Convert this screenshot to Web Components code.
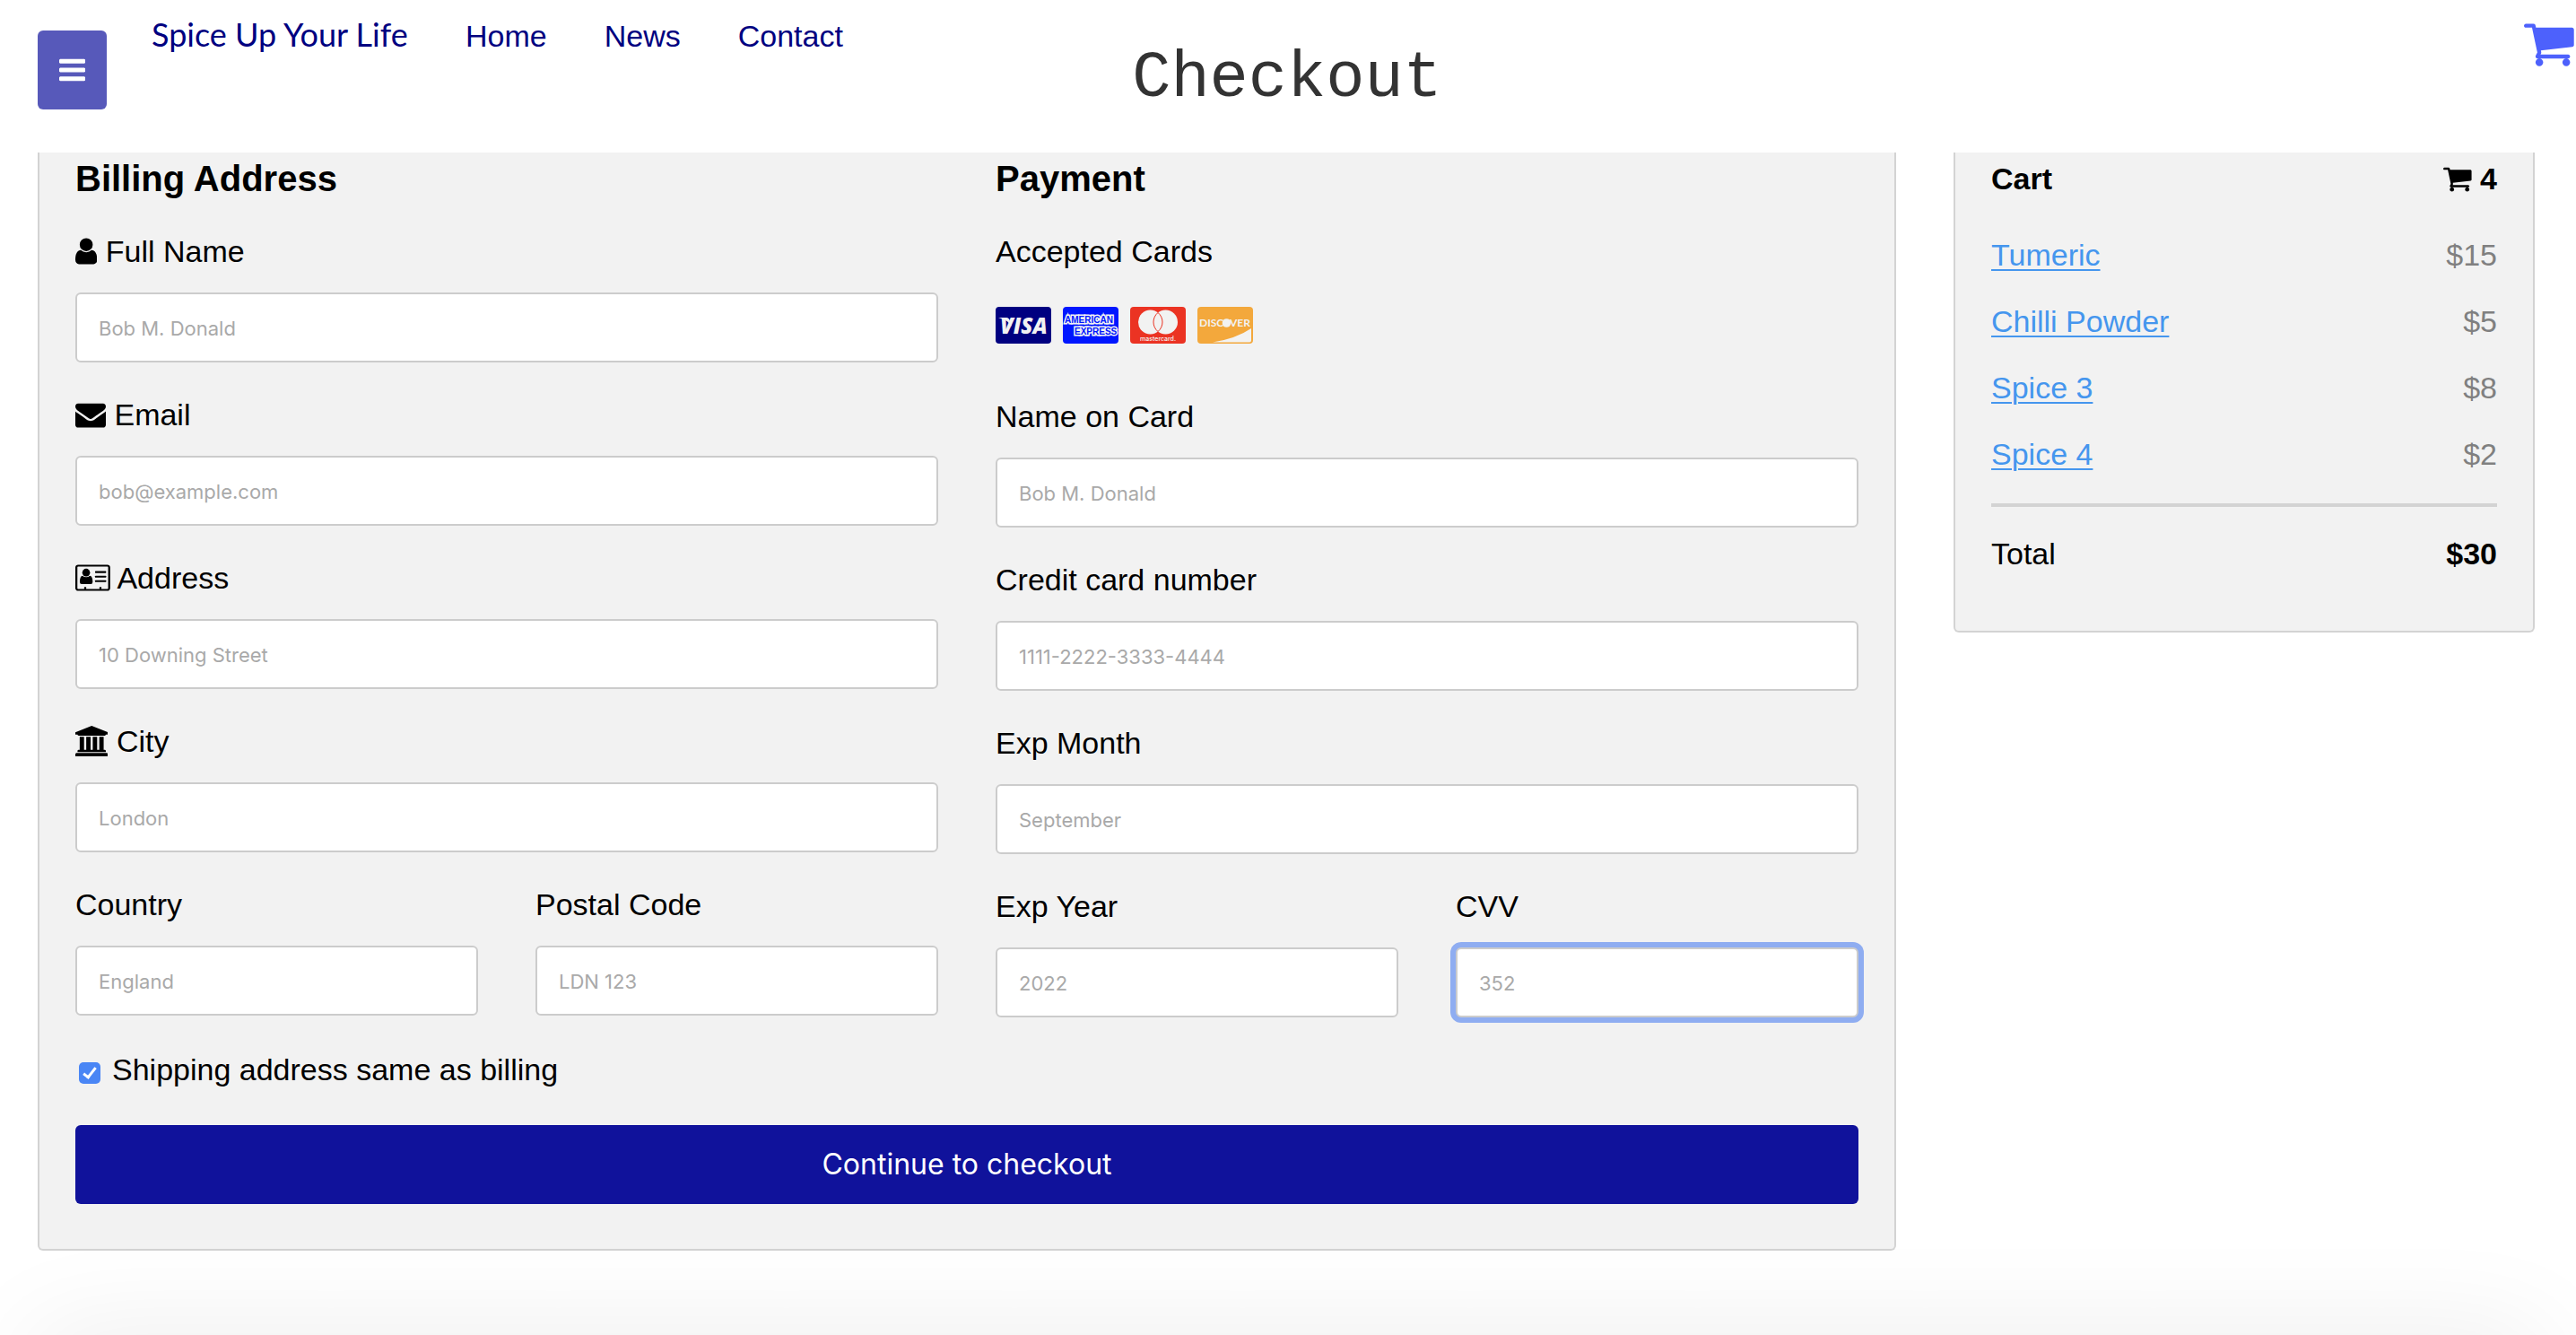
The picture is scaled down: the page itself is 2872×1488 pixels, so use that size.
<!DOCTYPE html>
<html lang="en">
<head>
<meta charset="utf-8">
<title>Checkout</title>
<style>
  html, body { margin: 0; }
  body { background: #fff; color: #000; font: 34px/40px "Liberation Sans", Arial, sans-serif; min-height: 100vh; overflow: hidden; }
</style>
</head>
<body>
<checkout-page></checkout-page>

<script>
const ICONS = {
  bars: ['128 0 1536 1792', '<path d="M1664 1344v128q0 26-19 45t-45 19h-1408q-26 0-45-19t-19-45v-128q0-26 19-45t45-19h1408q26 0 45 19t19 45zm0-512v128q0 26-19 45t-45 19h-1408q-26 0-45-19t-19-45v-128q0-26 19-45t45-19h1408q26 0 45 19t19 45zm0-512v128q0 26-19 45t-45 19h-1408q-26 0-45-19t-19-45v-128q0-26 19-45t45-19h1408q26 0 45 19t19 45z"/>'],
  cart: ['64 0 1664 1792', '<path d="M704 1536q0 52-38 90t-90 38-90-38-38-90 38-90 90-38 90 38 38 90zm896 0q0 52-38 90t-90 38-90-38-38-90 38-90 90-38 90 38 38 90zm128-1088v512q0 24-16.5 42.5t-40.5 21.5l-1044 122q13 60 13 70 0 16-24 64h920q26 0 45 19t19 45-19 45-45 19h-1024q-26 0-45-19t-19-45q0-11 8-31.5t16-36 21.5-40 15.5-29.5l-177-823h-204q-26 0-45-19t-19-45 19-45 45-19h256q16 0 28.5 6.5t19.5 15.5 13 24.5 8 26 5.5 29.5 4.5 26h1201q26 0 45 19t19 45z"/>'],
  user: ['256 0 1280 1792', '<path d="M1536 1399q0 109-62.5 187t-150.5 78h-854q-88 0-150.5-78t-62.5-187q0-85 8.5-160.5t31.5-152 58.5-131 94-89 134.5-34.5q131 128 313 128t313-128q76 0 134.5 34.5t94 89 58.5 131 31.5 152 8.5 160.5zm-256-887q0 159-112.5 271.5t-271.5 112.5-271.5-112.5-112.5-271.5 112.5-271.5 271.5-112.5 271.5 112.5 112.5 271.5z"/>'],
  envelope: ['0 0 1792 1792', '<path d="M1792 710v794q0 66-47 113t-113 47h-1472q-66 0-113-47t-47-113v-794q44 49 101 87 362 246 497 345 57 42 92.5 65.5t94.5 48 110 24.5h2q51 0 110-24.5t94.5-48 92.5-65.5q170-123 498-345 57-39 100-87zm0-294q0 79-49 151t-122 123q-376 261-468 325-10 7-42.5 31t-54 38.5-52 32.5-57.5 27-50 9h-2q-23 0-50-9t-57.5-27-52-32.5-54-38.5-42.5-31q-91-64-262-182.5t-205-142.5q-62-42-117-115.5t-55-136.5q0-78 41.5-130t118.5-52h1472q65 0 112.5 47t47.5 113z"/>'],
  card: ['0 0 2048 1792', '<path fill-rule="evenodd" d="M160 128h1728q66 0 113 47t47 113v1216q0 66-47 113t-113 47h-1728q-66 0-113-47t-47-113v-1216q0-66 47-113t113-47zm0 110q-40 0-40 40v1236q0 40 40 40h1728q40 0 40-40v-1236q0-40-40-40z"/><circle cx="636" cy="590" r="228"/><path d="M420 775q90 86 216 86t216-86q166 20 166 370 0 120-110 120h-536q-110 0-110-120 0-350 158-370z"/><rect x="1159" y="506" width="650" height="110" rx="30"/><rect x="1159" y="772" width="650" height="110" rx="30"/><rect x="1159" y="1038" width="650" height="110" rx="30"/><rect x="520" y="1430" width="120" height="140" rx="30"/><rect x="1415" y="1430" width="120" height="140" rx="30"/>'],
  bank: ['0 0 1920 1792', '<path d="M960 0l960 384v128h-128q0 26-20.5 45t-48.5 19h-1526q-28 0-48.5-19t-20.5-45h-128v-128zm-704 640h256v768h128v-768h256v768h128v-768h256v768h128v-768h256v768h59q28 0 48.5 19t20.5 45v64h-1664v-64q0-26 20.5-45t48.5-19h59v-768zm1595 960q28 0 48.5 19t20.5 45v128h-1920v-128q0-26 20.5-45t48.5-19h1782z"/>']
};

function define(name, render) {
  customElements.define(name, class extends HTMLElement {
    connectedCallback() {
      if (this.shadowRoot) return;
      const root = this.attachShadow({ mode: 'open' });
      const t = document.createElement('template');
      t.innerHTML = render(this);
      root.append(t.content.cloneNode(true));
    }
  });
}

define('fa-icon', el => {
  const [box, body] = ICONS[el.getAttribute('name')];
  return `<style>
    :host { display: inline-block; height: var(--icon-size, 34px); line-height: 0; vertical-align: -5px; }
    svg { display: block; height: 100%; width: auto; fill: currentColor; }
  </style><svg viewBox="${box}" aria-hidden="true">${body}</svg>`;
});

define('site-header', () => `<style>
  :host { display: grid; grid-template-columns: 1fr auto 1fr; align-items: start; height: 170px; padding-right: 2px; background: #fff; }
  .left { display: flex; align-items: flex-start; padding-left: 42px; }
  button { display: grid; place-items: center; width: 77px; height: 88px; margin: 34px 50px 0 0; padding: 0; border: 0; border-radius: 6px; background: #5759ba; color: #fff; }
  nav { display: flex; align-items: baseline; gap: 64px; padding-top: 16px; white-space: nowrap; }
  nav a { color: #000080; text-decoration: none; line-height: 44px; }
  .logo { min-width: 286px; font: 400 36px/44px Papyrus, Lato, sans-serif; }
  h1 { margin: 0; padding-top: 46px; font: 400 72px/84px "Liberation Mono", "Courier New", monospace; color: #333; }
  .cart { justify-self: end; padding-top: 18px; color: #4d61fc; --icon-size: 60px; line-height: 0; }
</style>
<div class="left">
  <button type="button" aria-label="Menu"><fa-icon name="bars"></fa-icon></button>
  <nav><a class="logo" href="#">Spice Up Your Life</a><a href="#home">Home</a><a href="#news">News</a><a href="#contact">Contact</a></nav>
</div>
<h1>Checkout</h1>
<a class="cart" href="#cart" aria-label="Cart"><fa-icon name="cart"></fa-icon></a>`);

define('shop-panel', () => `<style>
  :host { display: block; background: #f2f2f2; border: 2px solid #d3d3d3; border-top: 0; border-radius: 0 0 6px 6px; padding: 6px 40px 0; }
</style><slot></slot>`);

define('form-field', el => `<style>
  :host { display: block; min-width: 0; }
  label { display: block; line-height: 40px; margin-bottom: 26px; white-space: nowrap; }
  input { display: block; box-sizing: border-box; width: 100%; height: 78px; padding: 2px 24px 0; border: 2px solid #ccc; border-radius: 6px; background: #fff; font: 22px/26px Inter, "Liberation Sans", sans-serif; color: #000; outline: 0; }
  input::placeholder { color: #a9a9a9; opacity: 1; }
  input:focus, :host([active]) input { box-shadow: 0 0 0 6px #8fadf1; }
</style>
<label for="f">${el.hasAttribute('icon') ? `<fa-icon name="${el.getAttribute('icon')}"></fa-icon> ` : ''}<slot></slot></label>
<input id="f" type="text" placeholder="${el.getAttribute('placeholder')}">`);

define('accepted-cards', () => `<style>
  :host { display: block; padding-bottom: 23px; }
  .row { display: flex; gap: 13px; margin-top: 42px; }
  svg { display: block; width: 62px; height: 41px; border-radius: 4px; }
  text { font-family: "Liberation Sans", sans-serif; font-weight: 700; fill: #f2f2f2; }
</style>
<div>Accepted Cards</div>
<div class="row">
  <svg viewBox="0 0 62 41" role="img" aria-label="Visa"><rect width="62" height="41" fill="#000080"/><text x="5" y="30" style="font:italic 800 24px 'Open Sans',sans-serif">VISA</text><path d="M3 12h9q3 0 4 4l2 6q-5-8-15-10z" fill="#f2f2f2"/></svg>
  <svg viewBox="0 0 62 41" role="img" aria-label="American Express"><rect width="62" height="41" fill="#0016ff"/><g stroke="#f2f2f2" stroke-width="3" paint-order="stroke"><text x="2" y="18" font-size="10" style="fill:#0016ff">AMERICAN</text><text x="13" y="31" font-size="10" style="fill:#0016ff">EXPRESS</text></g></svg>
  <svg viewBox="0 0 62 41" role="img" aria-label="Mastercard"><rect width="62" height="41" fill="#eb3323"/><circle cx="22.5" cy="17" r="13.5" fill="#f2f2f2"/><circle cx="39.5" cy="17" r="13.5" fill="#f2f2f2"/><path d="M31 6.5a13.5 13.5 0 0 1 0 21a13.5 13.5 0 0 1 0-21z" fill="none" stroke="#eb3323"/><text x="11" y="38" style="font:500 7px Inter,sans-serif">mastercard.</text></svg>
  <svg viewBox="0 0 62 41" role="img" aria-label="Discover"><rect width="62" height="41" fill="#f3a83c"/><text x="2" y="22" style="font:700 12px Lato,sans-serif">DISC</text><circle cx="32.5" cy="18" r="4.8" fill="#f2f2f2"/><text x="36" y="22" style="font:700 12px Lato,sans-serif">VER</text><path d="M17 39.5q26-4 43-15.5v13.5q0 2-2 2z" fill="#f2f2f2"/></svg>
</div>`);

define('check-option', () => `<style>
  :host { display: block; }
  label { display: flex; align-items: center; gap: 13px; padding-left: 4px; }
  input { appearance: none; display: grid; place-items: center; width: 24px; height: 24px; margin: 7px 0 0; border-radius: 5px; background: #4a86f5; }
  input:checked::before { content: ""; width: 5px; height: 12px; margin-bottom: 3px; border: solid #fff; border-width: 0 3px 3px 0; transform: rotate(38deg); }
</style>
<label><input type="checkbox" checked><span><slot></slot></span></label>`);

define('checkout-form', () => `<style>
  :host { display: block; }
  h3 { margin: 0; font-size: 40px; line-height: 46px; }
  .cols, .pair { display: grid; grid-template-columns: 1fr 1fr; column-gap: 64px; }
  .col { display: flex; flex-direction: column; gap: 38px; min-width: 0; }
  form { margin: 0; }
  check-option { margin: 38px 0 42px; }
  button { display: block; width: 100%; height: 88px; margin: 0 0 50px; padding: 0; border: 0; border-radius: 6px; background: #10129b; color: #fff; font: 32px/40px Inter, "Liberation Sans", sans-serif; }
</style>
<form>
  <div class="cols">
    <div class="col">
      <h3>Billing Address</h3>
      <form-field icon="user" placeholder="Bob M. Donald">Full Name</form-field>
      <form-field icon="envelope" placeholder="bob@example.com">Email</form-field>
      <form-field icon="card" placeholder="10 Downing Street">Address</form-field>
      <form-field icon="bank" placeholder="London">City</form-field>
      <div class="pair">
        <form-field placeholder="England">Country</form-field>
        <form-field placeholder="LDN 123">Postal Code</form-field>
      </div>
    </div>
    <div class="col">
      <h3>Payment</h3>
      <accepted-cards></accepted-cards>
      <form-field placeholder="Bob M. Donald">Name on Card</form-field>
      <form-field placeholder="1111-2222-3333-4444">Credit card number</form-field>
      <form-field placeholder="September">Exp Month</form-field>
      <div class="pair">
        <form-field placeholder="2022">Exp Year</form-field>
        <form-field placeholder="352" active>CVV</form-field>
      </div>
    </div>
  </div>
  <check-option>Shipping address same as billing</check-option>
  <button type="button">Continue to checkout</button>
</form>`);

define('cart-item', el => `<style>
  :host { display: flex; justify-content: space-between; line-height: 38px; margin-bottom: 36px; }
  a { color: #4596ee; text-decoration: underline; text-decoration-thickness: 2px; text-underline-offset: 4px; }
  span { color: #808080; }
</style><a href="#"><slot></slot></a><span>${el.getAttribute('price')}</span>`);

define('cart-summary', () => `<style>
  :host { display: block; padding-bottom: 67px; }
  h4 { display: flex; justify-content: space-between; margin: 0 0 43px; font-size: 34px; line-height: 46px; }
  hr { height: 4px; margin: 0 0 33px; border: 0; background: #d3d3d3; }
  .total { display: flex; justify-content: space-between; line-height: 38px; }
</style>
<h4><span>Cart</span><span><fa-icon name="cart"></fa-icon> 4</span></h4>
<cart-item price="$15">Tumeric</cart-item>
<cart-item price="$5">Chilli Powder</cart-item>
<cart-item price="$8">Spice 3</cart-item>
<cart-item price="$2">Spice 4</cart-item>
<hr>
<div class="total"><span>Total</span><b>$30</b></div>`);

define('checkout-page', () => `<style>
  :host { display: block; min-height: 100vh; }
  main { display: grid; grid-template-columns: 3fr 1fr; align-items: start; padding: 0 14px 0 10px; }
  .cell { padding: 0 32px; min-width: 0; }
  .glow { position: fixed; left: 40px; right: 40px; top: 100%; height: 100px; box-shadow: 0 0 120px rgba(0, 0, 0, .08); }
</style>
<site-header></site-header>
<main>
  <div class="cell"><shop-panel><checkout-form></checkout-form></shop-panel></div>
  <div class="cell"><shop-panel><cart-summary></cart-summary></shop-panel></div>
</main>
<div class="glow"></div>`);
</script>
</body>
</html>
